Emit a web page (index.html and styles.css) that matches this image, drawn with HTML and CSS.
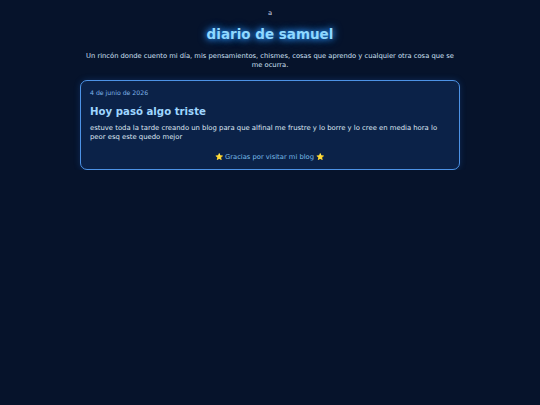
FILE: index.html
```html
<!DOCTYPE html>
<html lang="es">
<head>
<meta charset="utf-8">
<title>diario de samuel</title>
<link rel="stylesheet" href="styles.css">
</head>
<body>
<div class="page">
  <div class="top">a</div>
  <h1 class="title">diario de samuel</h1>
  <p class="subtitle">Un rincón donde cuento mi día, mis pensamientos, chismes, cosas que aprendo y cualquier otra cosa que se me ocurra.</p>
  <article class="card">
    <div class="date">4 de junio de 2026</div>
    <h2 class="post-title">Hoy pasó algo triste</h2>
    <p class="post-body">estuve toda la tarde creando un blog para que alfinal me frustre y lo borre y lo cree en media hora lo peor esq este quedo mejor</p>
    <div class="thanks">⭐ Gracias por visitar mi blog ⭐</div>
  </article>
</div>
</body>
</html>
```
FILE: styles.css
```css
html, body {
  margin: 0;
  padding: 0;
  background: #06132b;
}
body {
  font-family: "DejaVu Sans", Verdana, sans-serif;
  color: #e6eefc;
}
.page {
  width: 380px;
  margin: 0 auto;
  padding-top: 9px;
  display: flex;
  flex-direction: column;
  align-items: stretch;
}
.top {
  text-align: center;
  font-size: 6.75px;
  line-height: 9px;
  color: #c8d2e4;
}
.title {
  margin: 7px 0 0;
  text-align: center;
  font-size: 13.5px;
  line-height: 18px;
  font-weight: bold;
  color: #8fd8ff;
  text-shadow: 0 0 6px #2f9bff, 0 0 10px #1f6fd0;
}
.subtitle {
  margin: 9px 6px 0;
  text-align: center;
  font-size: 6.75px;
  line-height: 9px;
  color: #cfe0f5;
}
.card {
  margin-top: 10px;
  background: #0b2248;
  border: 1px solid #4d93e6;
  border-radius: 7px;
  padding: 7px 10px 7px 9px;
  box-shadow: 0 0 6px rgba(40, 120, 230, 0.25);
}
.date {
  font-size: 6.2px;
  line-height: 9px;
  color: #7fb5e8;
}
.post-title {
  margin: 8px 0 0;
  font-size: 10.2px;
  line-height: 14px;
  font-weight: bold;
  color: #9fd6ff;
}
.post-body {
  margin: 5px 0 0;
  font-size: 6.85px;
  line-height: 9px;
  color: #dfe7f3;
}
.thanks {
  margin-top: 11px;
  text-align: center;
  font-size: 6.75px;
  line-height: 9px;
  color: #79bde8;
}
```
